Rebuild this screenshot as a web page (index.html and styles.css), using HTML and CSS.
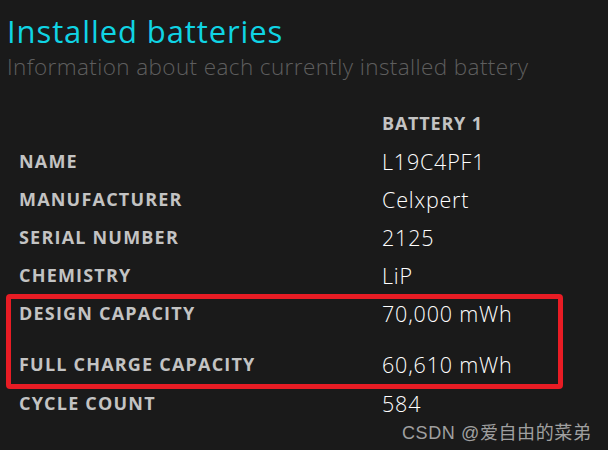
FILE: index.html
```html
<!DOCTYPE html>
<html>
<head>
<meta charset="utf-8">
<link rel="stylesheet" href="styles.css">
</head>
<body>
<div class="page">
  <h1 class="title">Installed batteries</h1>
  <p class="subtitle">Information about each currently installed battery</p>
  <div class="table">
    <div class="row head"><span class="label"></span><span class="colhead">BATTERY 1</span></div>
    <div class="row"><span class="label">NAME</span><span class="value">L19C4PF1</span></div>
    <div class="row"><span class="label">MANUFACTURER</span><span class="value">Celxpert</span></div>
    <div class="row"><span class="label">SERIAL NUMBER</span><span class="value">2125</span></div>
    <div class="row"><span class="label">CHEMISTRY</span><span class="value">LiP</span></div>
    <div class="highlight">
      <div class="row design"><span class="label">DESIGN CAPACITY</span><span class="value">70,000 mWh</span></div>
      <div class="row full"><span class="label">FULL CHARGE CAPACITY</span><span class="value">60,610 mWh</span></div>
    </div>
    <div class="row cycle"><span class="label">CYCLE COUNT</span><span class="value">584</span></div>
  </div>
  <div class="watermark">CSDN @爱自由的菜弟</div>
</div>
</body>
</html>
```
FILE: styles.css
```css
html, body {
  margin: 0;
  padding: 0;
  background: #1a1a1a;
  width: 608px;
  height: 450px;
  overflow: hidden;
}
.page {
  position: relative;
  width: 608px;
  height: 450px;
  font-family: "Open Sans", "Noto Sans", sans-serif;
}
.title {
  margin: 0;
  padding: 12px 0 0 7px;
  font-size: 31px;
  font-weight: 400;
  line-height: 38px;
  color: #10d4e4;
  letter-spacing: 0.9px;
}
.subtitle {
  margin: 0;
  padding: 0 0 0 7px;
  font-size: 22.5px;
  font-weight: 300;
  line-height: 34px;
  color: #5e5e5e;
  letter-spacing: 0.4px;
}
.table {
  margin-top: 20px;
  display: flex;
  flex-direction: column;
}
.row {
  display: flex;
  align-items: center;
  height: 38px;
}
.label {
  box-sizing: border-box;
  width: 382px;
  padding-left: 19px;
  flex: none;
  font-size: 18px;
  font-weight: 700;
  color: #c3c3c3;
  letter-spacing: 1.2px;
}
.colhead {
  font-size: 18px;
  font-weight: 700;
  color: #c3c3c3;
  letter-spacing: 0.8px;
}
.value {
  font-size: 21.5px;
  font-weight: 300;
  color: #ffffff;
  letter-spacing: 0.8px;
}
.highlight {
  margin: 0 45px 0 6px;
  border: 5px solid #e81c24;
  border-radius: 4px;
  padding-bottom: 1px;
}
.highlight .label {
  width: 371px;
  padding-left: 8px;
}
.row.design {
  height: 28px;
}
.row.full {
  margin-top: 18px;
}
.row.cycle {
  height: 28px;
}
.watermark {
  position: absolute;
  left: 402px;
  top: 418px;
  font-size: 18px;
  color: #a0a0a0;
  letter-spacing: 0.6px;
  font-family: "Liberation Sans", "Noto Sans CJK SC", sans-serif;
}
```
